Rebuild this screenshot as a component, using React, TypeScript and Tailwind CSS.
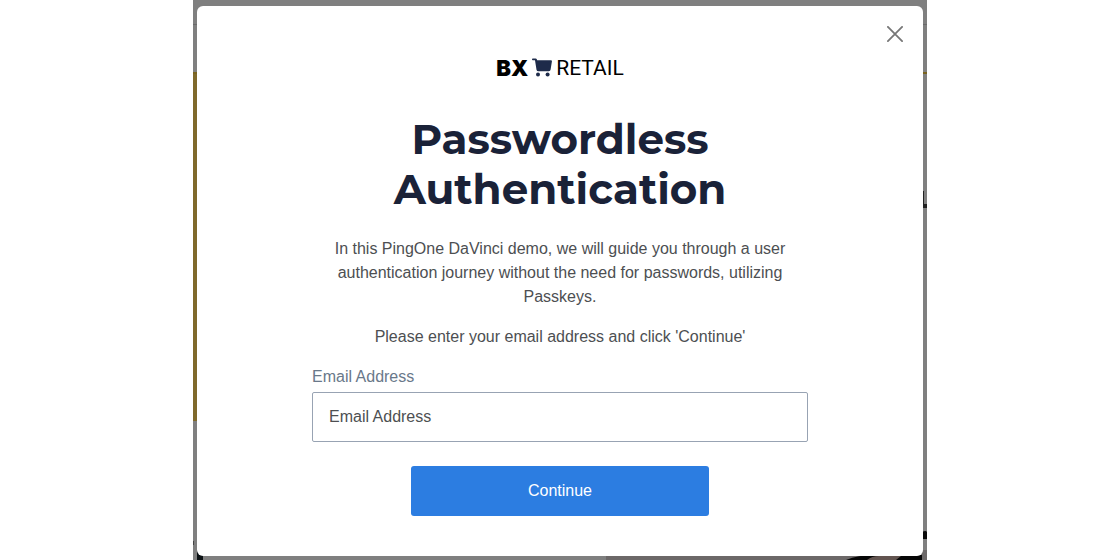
import React from "react";

function PageBackdrop() {
  return (
    <svg
      aria-hidden="true"
      className="absolute inset-0 h-full w-full"
      viewBox="0 0 734 560"
      preserveAspectRatio="none"
    >
      <rect width="734" height="560" fill="#7f7f7f" />
      <rect y="24" width="734" height="1" fill="#6a6a6a" />
      <rect y="72" width="734" height="2" fill="#79631f" />
      <rect y="74" width="8" height="347" fill="#7f692b" />
      <path d="M728 191h3v13h3v4h-6z" fill="#222" />
      <path d="M0 541h1v4H0z" fill="#444" />
      <path d="M4 550h6v10H4z" fill="#0c1114" />
      <rect x="413" y="550" width="321" height="10" fill="#6c6868" />
      <path d="M653 560q12-5 28-5h48v5z" fill="#060606" />
      <path d="M674 560q5-4 12-4h22l-5 4z" fill="#625450" />
      <path d="M729 532q4-2 5 0v7h-5z" fill="#0b0b0b" />
    </svg>
  );
}

function Logo() {
  return (
    <div className="flex h-6 items-center justify-center text-black">
      <span className="font-['Inter',sans-serif] text-[22px] leading-6 font-black">BX</span>
      <svg className="ml-1 h-5 w-5" viewBox="0 0 20 20" fill="#1e2b4a" aria-hidden="true">
        <path d="M.8.4h2.8q.9 0 1.2.9l.3 1H19q1.1 0 .9 1.1l-1.3 8.2q-.2 1.6-1.8 1.6H6.4q-1.6 0-1.9-1.5L3 2.2H.8Q0 2.2 0 1.3T.8.4Z" />
        <circle cx="6" cy="16.6" r="2" />
        <circle cx="15.6" cy="16.6" r="2" />
      </svg>
      <span className="ml-1 font-['Roboto',sans-serif] text-[21px] leading-6">RETAIL</span>
    </div>
  );
}

export default function App() {
  return (
    <div className="flex min-h-screen justify-center bg-white font-['Liberation_Sans',Arial,sans-serif]">
      <div className="relative w-full max-w-[734px] px-1 pt-1.5 pb-1">
        <PageBackdrop />
        <main
          role="dialog"
          aria-labelledby="dialog-title"
          className="relative rounded-md bg-white px-6 pt-[50px] pb-10"
        >
          <button type="button" aria-label="Close" className="absolute top-4 right-4 p-1 text-[#777]">
            <svg className="h-4 w-4" viewBox="0 0 16 16" fill="none" stroke="currentColor" strokeWidth="1.8" strokeLinecap="round">
              <path d="M.9.9l14.2 14.2M15.1.9.9 15.1" />
            </svg>
          </button>

          <div className="mx-auto max-w-[496px]">
            <Logo />
            <h1
              id="dialog-title"
              className="mt-[34px] text-center font-['Montserrat','Inter',sans-serif] text-[42px] leading-[50px] font-bold text-[#1a2238]"
            >
              Passwordless <br />
              Authentication
            </h1>
            <div className="mt-[23px] px-4 text-center text-base leading-6 text-[#4d4f52]">
              <p>
                In this PingOne DaVinci demo, we will guide you through a user authentication journey
                without the need for passwords, utilizing Passkeys.
              </p>
              <p className="mt-4">Please enter your email address and click 'Continue'</p>
            </div>

            <form className="mt-4" onSubmit={(event) => event.preventDefault()}>
              <label htmlFor="email" className="block text-base leading-6 text-[#69788a]">
                Email Address
              </label>
              <input
                id="email"
                type="email"
                placeholder="Email Address"
                className="mt-[3px] block h-[50px] w-full rounded-xs border border-[#98a3b3] bg-white px-4 text-base text-[#4d4f52] placeholder:text-[#4d4f52]"
              />
              <button
                type="submit"
                className="mx-auto mt-6 block h-[50px] w-3/5 rounded-[3px] bg-[#2c7de1] text-base text-white"
              >
                Continue
              </button>
            </form>
          </div>
        </main>
      </div>
    </div>
  );
}
